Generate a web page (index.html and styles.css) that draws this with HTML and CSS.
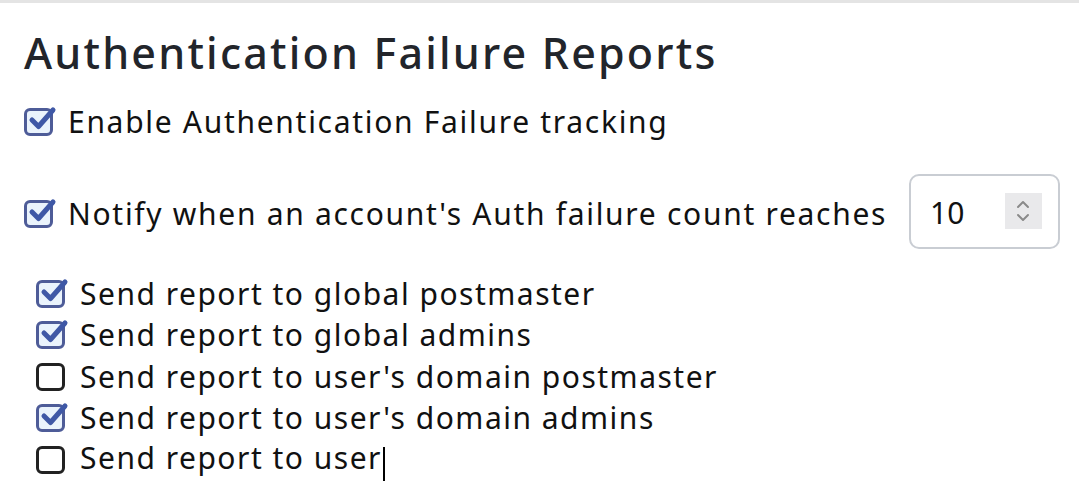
FILE: index.html
```html
<!DOCTYPE html>
<html lang="en">
<head>
    <meta charset="UTF-8">
    <title>Authentication Failure Reports</title>
    <link rel="stylesheet" href="styles.css">
</head>
<body>
<div class="topline"></div>
<div class="panel">
    <h2 class="title">Authentication Failure Reports</h2>

    <label class="row main">
        <span class="box checked">
            <svg viewBox="0 0 32 30" width="32" height="30"><path d="M7 15 L13.5 21.5 L28 5" fill="none" stroke="#3f58a6" stroke-width="5" stroke-linecap="round" stroke-linejoin="round"/></svg>
        </span>
        <span class="txt">Enable Authentication Failure tracking</span>
    </label>

    <div class="row main notify">
        <span class="box checked">
            <svg viewBox="0 0 32 30" width="32" height="30"><path d="M7 15 L13.5 21.5 L28 5" fill="none" stroke="#3f58a6" stroke-width="5" stroke-linecap="round" stroke-linejoin="round"/></svg>
        </span>
        <span class="txt">Notify when an account's Auth failure count reaches</span>
        <div class="numbox">
            <span class="num">10</span>
            <span class="spin">
                <svg viewBox="0 0 36 36" width="36" height="36">
                    <path d="M13 14 L18 9 L23 14" fill="none" stroke="#8a8a8a" stroke-width="2" stroke-linecap="round" stroke-linejoin="round"/>
                    <path d="M13 22 L18 27 L23 22" fill="none" stroke="#8a8a8a" stroke-width="2" stroke-linecap="round" stroke-linejoin="round"/>
                </svg>
            </span>
        </div>
    </div>

    <div class="sublist">
        <label class="row sub">
            <span class="box checked"><svg viewBox="0 0 32 30" width="32" height="30"><path d="M7 15 L13.5 21.5 L28 5" fill="none" stroke="#3f58a6" stroke-width="5" stroke-linecap="round" stroke-linejoin="round"/></svg></span>
            <span class="txt">Send report to global postmaster</span>
        </label>
        <label class="row sub">
            <span class="box checked"><svg viewBox="0 0 32 30" width="32" height="30"><path d="M7 15 L13.5 21.5 L28 5" fill="none" stroke="#3f58a6" stroke-width="5" stroke-linecap="round" stroke-linejoin="round"/></svg></span>
            <span class="txt">Send report to global admins</span>
        </label>
        <label class="row sub">
            <span class="box"></span>
            <span class="txt">Send report to user's domain postmaster</span>
        </label>
        <label class="row sub">
            <span class="box checked"><svg viewBox="0 0 32 30" width="32" height="30"><path d="M7 15 L13.5 21.5 L28 5" fill="none" stroke="#3f58a6" stroke-width="5" stroke-linecap="round" stroke-linejoin="round"/></svg></span>
            <span class="txt">Send report to user's domain admins</span>
        </label>
        <label class="row sub">
            <span class="box"></span>
            <span class="txt">Send report to user<span class="caret"></span></span>
        </label>
    </div>
</div>
</body>
</html>
```

FILE: styles.css
```css
* {
    box-sizing: border-box;
}
body {
    margin: 0;
    background: #ffffff;
    font-family: "Noto Sans", "Open Sans", sans-serif;
    color: #111111;
}
.topline {
    height: 3px;
    background: #e4e4e4;
}
.panel {
    padding: 0 0 0 24px;
}
.title {
    margin: 0;
    padding-top: 20px;
    height: 99px;
    font-size: 43px;
    font-weight: 500;
    letter-spacing: 2.2px;
    color: #22252b;
}
.row {
    display: flex;
    align-items: center;
}
.txt {
    font-size: 30px;
    letter-spacing: 1.7px;
    line-height: 40px;
    position: relative;
}
.box {
    position: relative;
    width: 29px;
    height: 28px;
    border: 3px solid #222222;
    border-radius: 6px;
    flex-shrink: 0;
}
.box.checked {
    border-color: #4e5c98;
    background: #eaf3fc;
}
.box svg {
    position: absolute;
    left: -2px;
    top: -6px;
}
.main .box {
    margin-right: 15px;
}
.main {
    height: 40px;
}
.notify {
    margin-top: 34px;
    height: 75px;
}
.numbox {
    margin-left: 22px;
    margin-top: -5px;
    width: 151px;
    height: 75px;
    border: 2px solid #c9cdd3;
    border-radius: 10px;
    display: flex;
    align-items: center;
    padding-left: 19px;
}
.num {
    font-size: 30px;
    color: #111111;
    flex: 1;
    padding-top: 2px;
}
.spin {
    width: 37px;
    height: 36px;
    background: #e9e9eb;
    margin-right: 16px;
}
.sublist {
    margin-top: 22px;
    padding-left: 12px;
}
.sub {
    height: 41.5px;
}
.sub .txt {
    letter-spacing: 1.5px;
}
.sub .box {
    margin-right: 15px;
}
.caret {
    display: inline-block;
    width: 2px;
    height: 40px;
    background: #000000;
    vertical-align: middle;
    margin-left: 1px;
    position: relative;
    top: 6px;
}
```
